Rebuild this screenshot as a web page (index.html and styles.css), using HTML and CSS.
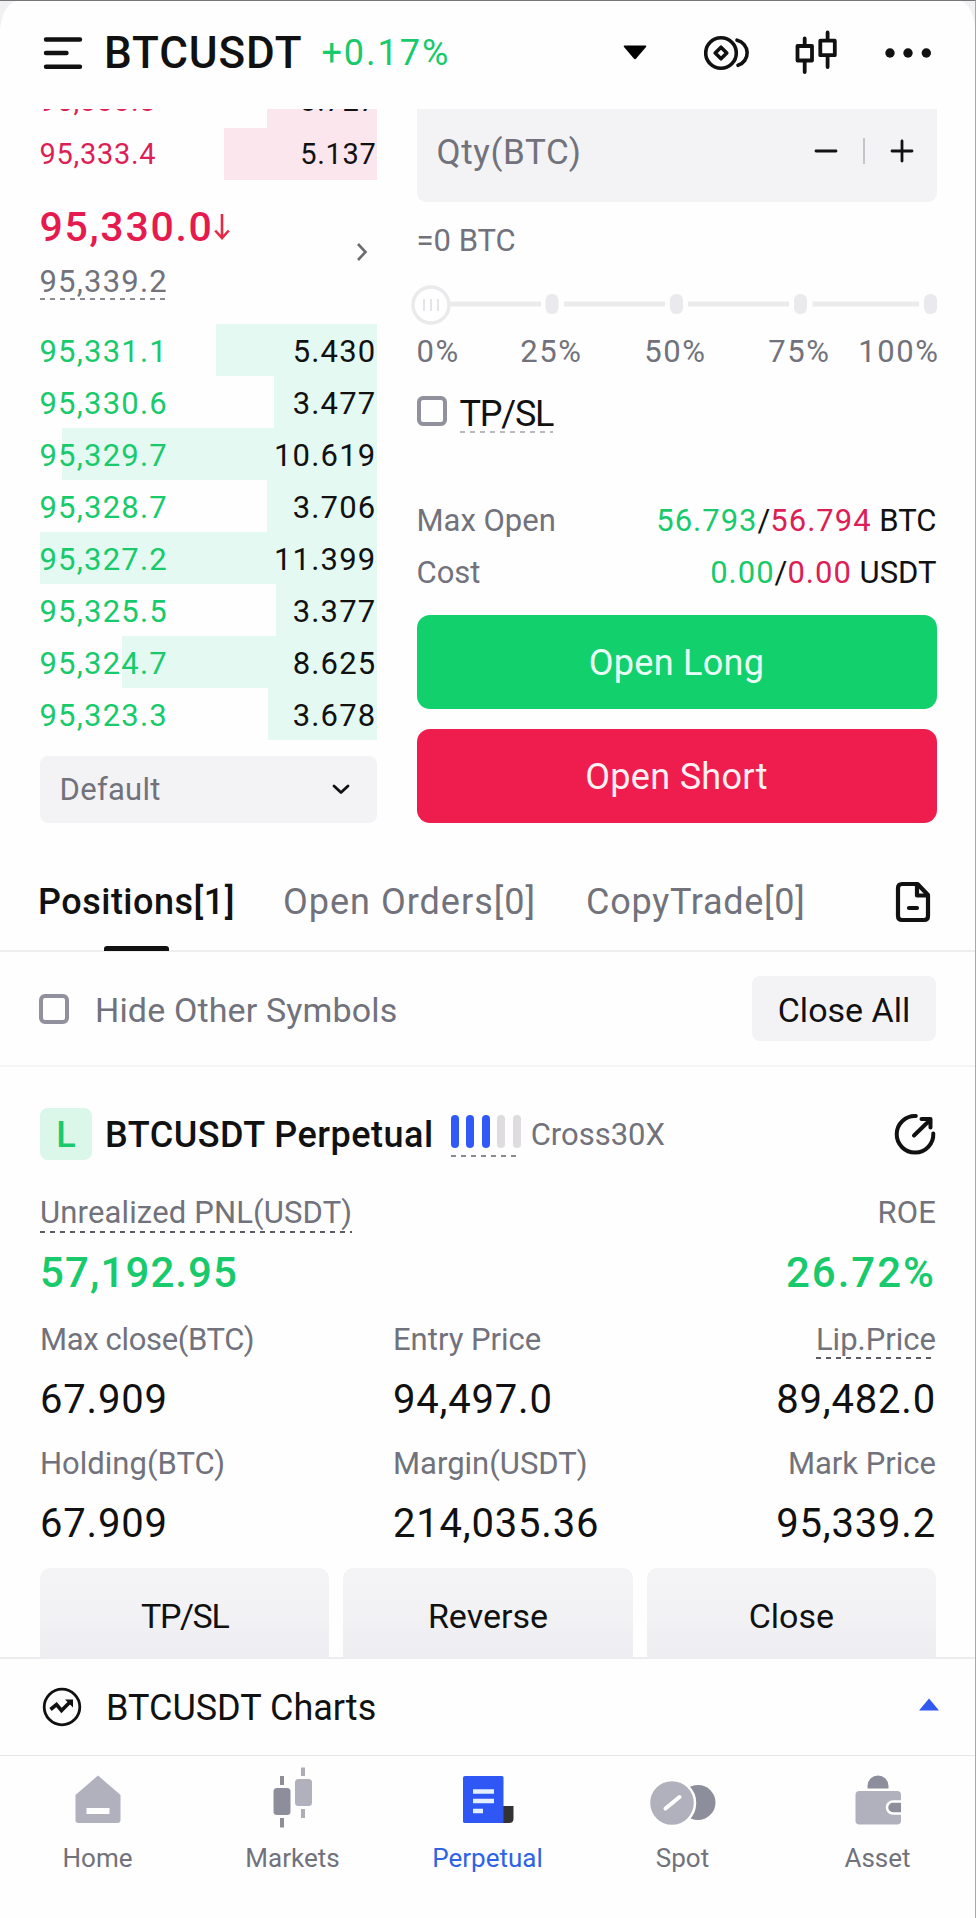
FILE: index.html
```html
<!DOCTYPE html>
<html lang="en">
<head>
    <meta charset="UTF-8">
    <meta name="viewport" content="width=device-width, initial-scale=1.0">
    <title>BTCUSDT Perpetual</title>
    <link rel="stylesheet" href="styles.css">
</head>
<body>
    <div class="app">
        <header class="topbar">
            <svg class="menu-icon" width="40" height="34" viewBox="0 0 40 34" fill="none" stroke="#111" stroke-width="4.4" stroke-linecap="round">
                <path d="M3 3.5H37M3 17H23.5M3 30.7H37"/>
            </svg>
            <h1 class="symbol">BTCUSDT</h1>
            <span class="change">+0.17%</span>
            <div class="top-icons">
                <svg width="24" height="15" viewBox="0 0 24 15"><path d="M1.5 0.5H22.5Q24 0.8 23 2L13.2 13.5Q12 14.8 10.8 13.5L1 2Q0 0.8 1.5 0.5Z" fill="#000"/></svg>
                <svg width="46" height="36" viewBox="0 0 46 36" fill="none" stroke="#111" stroke-width="3.6" stroke-linecap="round">
                    <circle cx="17" cy="18" r="15.3"/>
                    <path d="M17 12.2L22.8 18L17 23.8L11.2 18Z" stroke-linejoin="round"/>
                    <path d="M33 5.2A13 13 0 0 1 34 30.3"/>
                </svg>
                <svg width="42" height="46" viewBox="0 0 42 46" fill="none" stroke="#111" stroke-width="3.8" stroke-linecap="round" stroke-linejoin="round">
                    <rect x="2.5" y="16" width="14.5" height="14.5"/>
                    <path d="M9.7 8.5V15M9.7 31V42"/>
                    <rect x="25.3" y="10.7" width="14.5" height="14.5"/>
                    <path d="M32.6 2.5V10M32.6 26V37"/>
                </svg>
                <svg width="48" height="12" viewBox="0 0 48 12" fill="#111">
                    <circle cx="6" cy="6" r="4.7"/><circle cx="24" cy="6" r="4.7"/><circle cx="42.3" cy="6" r="4.7"/>
                </svg>
            </div>
        </header>

        <main class="content">
            <section class="trade">
                <div class="book">
                    <div class="row ask"><i class="depth" style="width:32.6%"></i><span>95,333.8</span><b>3.727</b></div>
                    <div class="row ask"><i class="depth" style="width:45.2%"></i><span>95,333.4</span><b>5.137</b></div>
                    <div class="last">
                        <div>
                            <div class="last-price">95,330.0<svg width="16" height="28" viewBox="0 0 16 28" fill="none" stroke="#e52b45" stroke-width="2.6"><path d="M8 1V25M1.2 17.5L8 25L14.8 17.5"/></svg></div>
                            <span class="mark-price dashed">95,339.2</span>
                        </div>
                        <svg class="last-arrow" width="12" height="20" viewBox="0 0 12 20" fill="none" stroke="#6b6b70" stroke-width="2.6"><path d="M2 2L9.5 10L2 18"/></svg>
                    </div>
                    <div class="row bid"><i class="depth" style="width:47.6%"></i><span>95,331.1</span><b>5.430</b></div>
                    <div class="row bid"><i class="depth" style="width:30.4%"></i><span>95,330.6</span><b>3.477</b></div>
                    <div class="row bid"><i class="depth" style="width:93.2%"></i><span>95,329.7</span><b>10.619</b></div>
                    <div class="row bid"><i class="depth" style="width:32.4%"></i><span>95,328.7</span><b>3.706</b></div>
                    <div class="row bid"><i class="depth" style="width:100%"></i><span>95,327.2</span><b>11.399</b></div>
                    <div class="row bid"><i class="depth" style="width:29.7%"></i><span>95,325.5</span><b>3.377</b></div>
                    <div class="row bid"><i class="depth" style="width:75.6%"></i><span>95,324.7</span><b>8.625</b></div>
                    <div class="row bid"><i class="depth" style="width:32.2%"></i><span>95,323.3</span><b>3.678</b></div>
                    <div class="select">
                        <span>Default</span>
                        <svg width="18" height="11" viewBox="0 0 18 11" fill="none" stroke="#111" stroke-width="2.8" stroke-linecap="round" stroke-linejoin="round"><path d="M2 2L9 8.6L16 2"/></svg>
                    </div>
                </div>

                <div class="order">
                    <div class="qty">
                        <span class="qty-label">Qty(BTC)</span>
                        <svg width="24" height="24" viewBox="0 0 24 24" stroke="#111" stroke-width="2.8" stroke-linecap="round"><path d="M2 12H22"/></svg>
                        <i class="qty-line"></i>
                        <svg width="24" height="24" viewBox="0 0 24 24" stroke="#111" stroke-width="2.8" stroke-linecap="round"><path d="M2 12H22M12 2V22"/></svg>
                    </div>
                    <div class="equals">=0 BTC</div>
                    <svg class="slider" width="527" height="42" viewBox="0 0 527 42">
                        <path d="M39 20H130M153 20H254M277 20H378M401.5 20H508" stroke="#ebebee" stroke-width="5"/>
                        <g fill="#e9e9ee">
                            <rect x="134.5" y="10" width="13" height="20" rx="6"/>
                            <rect x="259" y="10" width="13" height="20" rx="6"/>
                            <rect x="383" y="10" width="13" height="20" rx="6"/>
                            <rect x="513" y="10" width="13" height="20" rx="6"/>
                        </g>
                        <circle cx="20" cy="21" r="18" fill="#fff" stroke="#ebe9ec" stroke-width="3.4"/>
                        <path d="M13 15V27M20 15V27M27 15V27" stroke="#e6e4e8" stroke-width="2"/>
                    </svg>
                    <div class="scale"><span>0%</span><span>25%</span><span>50%</span><span>75%</span><span>100%</span></div>
                    <div class="tpsl"><i class="checkbox"></i><span class="dashed light">TP/SL</span></div>
                    <div class="info"><span>Max Open</span><b><em class="up">56.793</em>/<em class="down">56.794</em> BTC</b></div>
                    <div class="info"><span>Cost</span><b><em class="up">0.00</em>/<em class="down">0.00</em> USDT</b></div>
                    <button class="btn-open long">Open Long</button>
                    <button class="btn-open short">Open Short</button>
                </div>
            </section>

            <nav class="tabs">
                <a class="tab active">Positions[1]</a>
                <a class="tab orders">Open Orders[0]</a>
                <a class="tab copy">CopyTrade[0]</a>
                <svg class="tab-icon" width="36" height="42" viewBox="0 0 36 42" fill="none" stroke="#111" stroke-width="4.2" stroke-linejoin="round" stroke-linecap="round">
                    <path d="M7 3H22.5L33 14V35Q33 39 29 39H7Q3 39 3 35V7Q3 3 7 3Z"/>
                    <path d="M22 4V14.5H32M14 27H22"/>
                </svg>
            </nav>

            <div class="filter">
                <i class="checkbox"></i>
                <span class="filter-text">Hide Other Symbols</span>
                <button class="close-all">Close All</button>
            </div>

            <section class="position">
                <div class="pos-head">
                    <span class="side">L</span>
                    <h2 class="pos-title">BTCUSDT Perpetual</h2>
                    <span class="level dashed"><i></i><i></i><i></i><i class="off"></i><i class="off"></i></span>
                    <span class="mode">Cross30X</span>
                    <svg class="share" width="42" height="42" viewBox="0 0 42 42" fill="none" stroke="#111" stroke-width="4" stroke-linecap="round" stroke-linejoin="round">
                        <path d="M21.8 3A18.3 18.3 0 1 0 39.3 20.5"/>
                        <path d="M20 22.5L35 8M27.5 6H36.5V14.5"/>
                    </svg>
                </div>
                <div class="pnl-labels"><span class="dashed dark">Unrealized PNL(USDT)</span><span>ROE</span></div>
                <div class="pnl-values"><span>57,192.95</span><span class="roe">26.72%</span></div>
                <div class="stats">
                    <div class="stat"><span class="tight">Max close(BTC)</span><b>67.909</b></div>
                    <div class="stat"><span>Entry Price</span><b>94,497.0</b></div>
                    <div class="stat right"><span class="dashed dark">Lip.Price</span><b>89,482.0</b></div>
                    <div class="stat"><span>Holding(BTC)</span><b>67.909</b></div>
                    <div class="stat"><span>Margin(USDT)</span><b>214,035.36</b></div>
                    <div class="stat right"><span>Mark Price</span><b>95,339.2</b></div>
                </div>
                <div class="actions">
                    <button class="tight">TP/SL</button>
                    <button>Reverse</button>
                    <button>Close</button>
                </div>
            </section>
        </main>

        <div class="charts">
            <svg width="40" height="40" viewBox="0 0 40 40" fill="none" stroke="#111" stroke-width="2.8">
                <circle cx="20" cy="20" r="17.8"/>
                <path d="M8.5 22.5L14.5 17.5L19.5 23.5L28 15" stroke-width="3.6"/>
                <path d="M23 12.5H31V20.5Z" fill="#111" stroke="none"/>
            </svg>
            <span class="charts-text">BTCUSDT Charts</span>
            <svg class="charts-arrow" width="20" height="13" viewBox="0 0 20 13"><path d="M10 0.5L20 12.5H0Z" fill="#3159f0"/></svg>
        </div>

        <footer class="nav">
            <a class="nav-item">
                <svg width="64" height="64" viewBox="0 0 64 64">
                    <path d="M32 8.5L54.5 28V53Q54.5 56 51.5 56H12.5Q9.5 56 9.5 53V28Z" fill="#b0b1bd"/>
                    <path d="M20.5 44H43.5" stroke="#fff" stroke-width="6"/>
                </svg>
                <span>Home</span>
            </a>
            <a class="nav-item">
                <svg width="64" height="64" viewBox="0 0 64 64">
                    <path d="M21 9V18M21 51V60.5" stroke="#8e8f96" stroke-width="4"/>
                    <rect x="12.5" y="21" width="17" height="27" rx="3.5" fill="#8d8e9b"/>
                    <path d="M42 0.5V9M42 42V51" stroke="#adadb3" stroke-width="4"/>
                    <rect x="34" y="12" width="17" height="27" rx="3.5" fill="#b0b1bd"/>
                </svg>
                <span>Markets</span>
            </a>
            <a class="nav-item active">
                <svg width="64" height="64" viewBox="0 0 64 64">
                    <path d="M46 39H57.5V51.5Q57.5 56 53 56H46Z" fill="#333"/>
                    <path d="M9 9H46Q47.5 9 47.5 10.5V56H9Q7 56 7 54.5V11Q7 9 9 9Z" fill="#2f57f5"/>
                    <path d="M17 24.5H38M17 34H38M17 44H27" stroke="#e4efff" stroke-width="4.5"/>
                </svg>
                <span>Perpetual</span>
            </a>
            <a class="nav-item">
                <svg width="66" height="64" viewBox="0 0 66 64">
                    <circle cx="48" cy="35.5" r="17.5" fill="#8d8e9b"/>
                    <circle cx="22" cy="36" r="23" fill="#b0b1bd" stroke="#fff" stroke-width="2.5"/>
                    <path d="M15.5 41.5L29.5 30" stroke="#fff" stroke-width="4" stroke-linecap="round"/>
                </svg>
                <span>Spot</span>
            </a>
            <a class="nav-item">
                <svg width="64" height="64" viewBox="0 0 64 64">
                    <path d="M21.5 21.5V19A10.5 10.5 0 0 1 42.5 19V21.5Z" fill="#8d8e9b"/>
                    <rect x="9.5" y="24" width="45.5" height="33.5" rx="4" fill="#b0b1bd"/>
                    <path d="M55 34.5H47A6 6 0 0 0 47 46.5H55" fill="#8d8e9b" stroke="#fff" stroke-width="2.5"/>
                </svg>
                <span>Asset</span>
            </a>
        </footer>
    </div>
</body>
</html>
```

FILE: styles.css
```css
* {
    box-sizing: border-box;
}
body {
    margin: 0;
    width: 976px;
    height: 1918px;
    background: #f1f1f4;
    border-top: 1px solid #77757a;
    border-right: 1px solid #a8a8aa;
    font-family: Roboto, "Liberation Sans", sans-serif;
    color: #111;
}
.app {
    display: flex;
    flex-direction: column;
    height: 1917px;
    overflow: hidden;
    background: #fefefe;
    border-radius: 18px 16px 0 0 / 32px 30px 0 0;
}
h1, h2 {
    margin: 0;
    font-weight: 500;
}
b, em, i {
    font-style: normal;
    font-weight: 400;
}
button {
    border: none;
    padding: 0;
    font-family: inherit;
    color: #111;
}
svg {
    flex: none;
    display: block;
}
.up {
    color: #18ca6c;
}
.down {
    color: #dc1f56;
}

/* dashed underline for labels that open a hint */
.dashed {
    background: repeating-linear-gradient(90deg, #8a8a92 0 5px, transparent 5px 10px) left bottom / 100% 2px no-repeat;
}
.dashed.light {
    background-image: repeating-linear-gradient(90deg, #b9b9bf 0 5px, transparent 5px 10px);
}
.dashed.dark {
    background-image: repeating-linear-gradient(90deg, #5c5c64 0 5px, transparent 5px 10px);
}
.checkbox {
    flex: none;
    width: 30px;
    height: 30px;
    border: 4px solid #90919c;
    border-radius: 6px;
}

/* top bar */
.topbar {
    display: flex;
    align-items: center;
    height: 108px;
    flex: none;
    padding: 0 43px 5px 43px;
}
.symbol {
    margin-left: 21px;
    padding-top: 1px;
    font-size: 44px;
    line-height: 60px;
    letter-spacing: 0.9px;
}
.change {
    margin-left: 19px;
    font-size: 36px;
    letter-spacing: 2px;
    color: #18ca6c;
}
.top-icons {
    display: flex;
    align-items: center;
    margin-left: auto;
}
.top-icons svg:nth-child(2) {
    margin-left: 57px;
}
.top-icons svg:nth-child(3) {
    margin-left: 45px;
}
.top-icons svg:nth-child(4) {
    margin-left: 47px;
}

.content {
    height: 1548px;
    flex: none;
    overflow: hidden;
}
.trade {
    display: flex;
    justify-content: space-between;
    height: 757px;
    padding: 0 38.5px 0 39.5px;
}

/* order book */
.book {
    width: 337px;
    margin-top: -34px;
}
.row {
    position: relative;
    display: flex;
    justify-content: space-between;
    align-items: center;
    height: 52px;
    padding-top: 2px;
    font-size: 31px;
    letter-spacing: 1.2px;
}
.row span, .row b {
    position: relative;
}
.row.ask {
    height: 52.5px;
    padding-top: 0;
    font-size: 29px;
    letter-spacing: 0.7px;
}
.depth {
    position: absolute;
    right: 0;
    top: 0;
    height: 100%;
}
.ask .depth {
    background: #fce6ed;
}
.bid .depth {
    background: #e4f9f1;
}
.ask span {
    color: #dc1f56;
}
.bid span {
    color: #18ca6c;
}
.last {
    display: flex;
    justify-content: space-between;
    height: 144px;
    padding: 22px 9px 0 0;
}
.last-price {
    display: flex;
    align-items: center;
    height: 50px;
    font-size: 41px;
    font-weight: 500;
    letter-spacing: 1.7px;
    color: #e51a4f;
}
.last-price svg {
    margin-left: 1px;
}
.mark-price {
    display: inline-block;
    margin-top: 11px;
    font-size: 31px;
    line-height: 37px;
    letter-spacing: 1.2px;
    color: #71727b;
}
.last-arrow {
    margin-top: 40px;
}
.select {
    display: flex;
    align-items: center;
    justify-content: space-between;
    height: 67px;
    margin-top: 16px;
    padding: 0 27px 0 20px;
    border-radius: 8px;
    background: #f3f3f6;
    font-size: 31px;
    letter-spacing: 0.3px;
    color: #71727b;
}

/* order form */
.order {
    width: 520px;
    color: #71727b;
}
.qty {
    display: flex;
    align-items: center;
    height: 93px;
    padding: 0 23px 9px 20px;
    background: #f3f3f6;
    border-radius: 0 0 9px 9px;
}
.qty-label {
    flex: 1;
    padding-top: 2px;
    font-size: 35px;
    letter-spacing: 0.6px;
}
.qty-line {
    width: 2px;
    height: 26px;
    margin: 0 25px;
    background: #c6c6ca;
}
.equals {
    height: 76px;
    font-size: 31px;
    line-height: 78px;
}
.slider {
    margin: 6px 0 0 -6px;
}
.scale {
    display: grid;
    grid-template-columns: 73px 124px 124px 124px 78px;
    height: 52px;
    font-size: 31px;
    line-height: 52px;
    letter-spacing: 1.6px;
    text-align: center;
}
.scale span:first-child {
    text-align: left;
}
.scale span:last-child {
    display: flex;
    justify-content: flex-end;
}
.tpsl {
    display: flex;
    height: 117px;
    padding-top: 18px;
}
.tpsl span {
    height: 37px;
    margin-left: 13px;
    font-size: 36px;
    line-height: 37px;
    letter-spacing: -1.2px;
    color: #111;
}
.info {
    display: flex;
    justify-content: space-between;
    height: 52px;
    font-size: 31px;
    line-height: 52px;
}
.info b {
    color: #111;
}
.info em {
    letter-spacing: 1px;
}
.btn-open {
    display: block;
    width: 100%;
    height: 94px;
    margin-top: 16px;
    padding-top: 2px;
    border-radius: 13px;
    font-size: 36px;
    letter-spacing: 0.3px;
    color: #eafff5;
}
.btn-open + .btn-open {
    margin-top: 20px;
    color: #fff0f3;
}
.long {
    background: #12d16d;
}
.short {
    background: #ef1d4e;
}

/* tabs */
.tabs {
    display: flex;
    align-items: center;
    height: 86px;
    padding: 0 44px 13px 38px;
    border-bottom: 2px solid #eeeef1;
    font-size: 36px;
    color: #71727b;
}
.tab {
    position: relative;
}
.tab.active {
    color: #111;
    font-weight: 500;
    letter-spacing: 0.5px;
}
.tab.active::after {
    content: "";
    position: absolute;
    left: 66px;
    bottom: -28px;
    width: 65px;
    height: 5px;
    border-radius: 3px 3px 0 0;
    background: #111;
}
.tab.orders {
    margin-left: 48px;
    letter-spacing: 1px;
}
.tab.copy {
    margin-left: 50px;
    letter-spacing: 0.7px;
}
.tab-icon {
    margin-left: auto;
}
.filter {
    display: flex;
    align-items: center;
    height: 115px;
    padding: 0 39px;
    border-bottom: 2px solid #f5f5f7;
    font-size: 34px;
    color: #71727b;
}
.filter-text {
    margin-left: 26px;
    padding-top: 2px;
    letter-spacing: 0.15px;
}
.close-all {
    width: 184px;
    height: 65px;
    margin-left: auto;
    padding-top: 2px;
    border-radius: 8px;
    background: #f3f3f6;
    font-size: 34px;
}

/* position card */
.position {
    padding: 41px 39px 0 40px;
}
.pos-head {
    display: flex;
    align-items: center;
    height: 52px;
}
.side {
    width: 52px;
    height: 52px;
    border-radius: 8px;
    background: #dbf7ea;
    font-size: 36px;
    font-weight: 500;
    line-height: 55px;
    text-align: center;
    color: #18ca6c;
}
.pos-title {
    margin-left: 13px;
    padding-top: 1px;
    font-size: 36px;
    letter-spacing: 0.5px;
}
.level {
    display: flex;
    justify-content: space-between;
    width: 70px;
    height: 42px;
    margin: 4px 0 0 17px;
    background-size: 66px 2px;
}
.level i {
    width: 8px;
    height: 33px;
    border-radius: 4px;
    background: #3159f8;
}
.level .off {
    background: #dedcdf;
}
.mode {
    margin-left: 10px;
    font-size: 31px;
}
.mode, .pnl-labels, .stat span {
    color: #71727b;
}
.share {
    margin-left: auto;
}
.pnl-labels, .pnl-values {
    display: flex;
    justify-content: space-between;
    align-items: flex-start;
}
.pnl-labels {
    height: 73px;
    padding-top: 33px;
    font-size: 31px;
    line-height: 40px;
    letter-spacing: 0.15px;
}
.pnl-values {
    height: 80px;
    font-size: 42px;
    font-weight: 500;
    line-height: 80px;
    letter-spacing: 1.1px;
    color: #18ca6c;
}
.pnl-values .roe {
    letter-spacing: 2px;
}
.stats {
    display: grid;
    grid-template-columns: 353px 1fr 200px;
    row-gap: 8px;
    padding-top: 8px;
}
.stat {
    height: 116px;
}
.stat span {
    display: table;
    font-size: 31px;
    line-height: 38px;
}
.stat span.tight {
    letter-spacing: -0.35px;
}
.stat b {
    display: block;
    padding-top: 13px;
    font-size: 40px;
    line-height: 56px;
    letter-spacing: 0.8px;
}
.stat.right {
    text-align: right;
}
.stat.right span {
    margin-left: auto;
}
.actions {
    display: grid;
    grid-template-columns: repeat(3, 1fr);
    gap: 14px;
    margin-top: 7px;
}
.actions button {
    height: 96px;
    border-radius: 10px;
    background: linear-gradient(#f4f4f6, #f2f2f5 50%, #ededf2 90%);
    font-size: 34px;
}
.actions .tight {
    letter-spacing: -1.4px;
}

/* charts bar */
.charts {
    display: flex;
    align-items: center;
    height: 99px;
    flex: none;
    padding: 0 36px 0 42px;
    border-top: 2px solid #eeebee;
    border-bottom: 1px solid #e6e6ea;
    font-size: 36px;
}
.charts-text {
    flex: 1;
    margin-left: 24px;
    padding-top: 2px;
}
.charts-arrow {
    margin-bottom: 6px;
}

/* bottom navigation */
.nav {
    display: grid;
    grid-template-columns: repeat(5, 1fr);
    flex: 1;
    padding-top: 11px;
}
.nav-item {
    display: flex;
    flex-direction: column;
    align-items: center;
    font-size: 26px;
    line-height: 32px;
    color: #71727b;
}
.nav-item span {
    margin-top: 11px;
}
.nav-item.active {
    color: #2f63e6;
}
```
